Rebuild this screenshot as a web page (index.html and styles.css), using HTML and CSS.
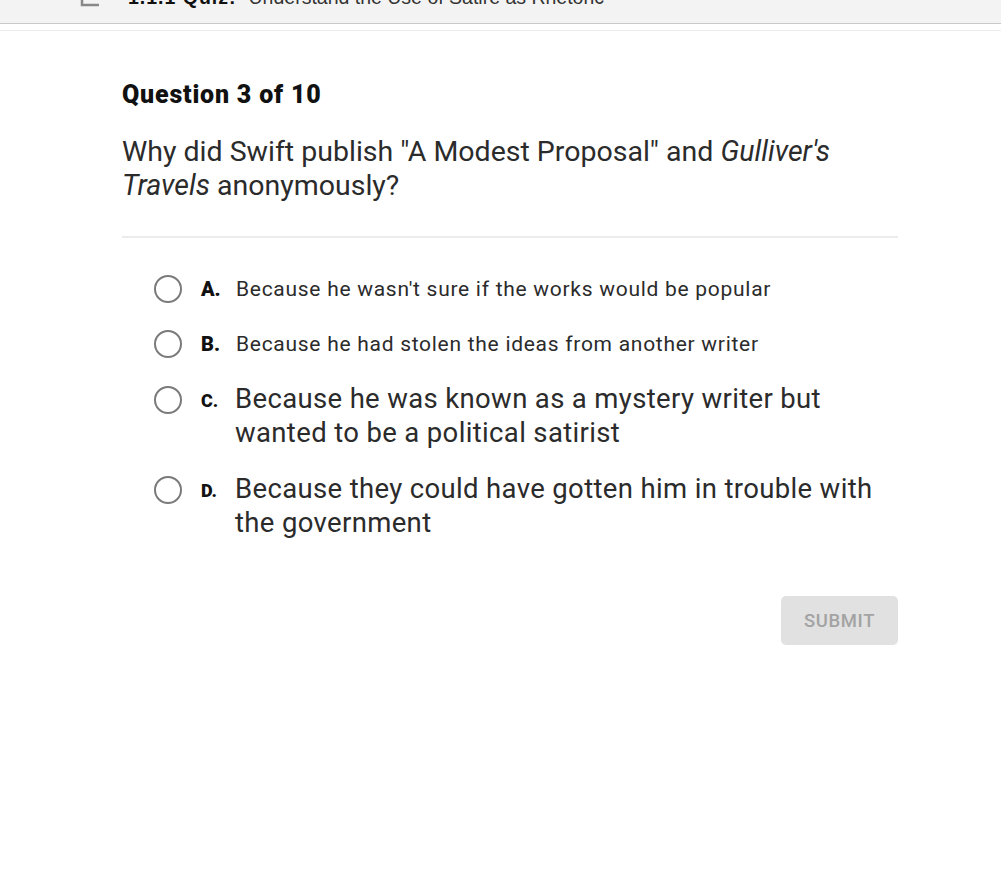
FILE: index.html
```html
<!DOCTYPE html>
<html>
<head>
<meta charset="utf-8">
<link rel="stylesheet" href="styles.css">
</head>
<body>
<header class="topbar">
  <div class="topbar-inner">
    <svg class="doc-icon" width="20" height="24" viewBox="0 0 20 24"><path d="M2 1 V21 H19" fill="none" stroke="#888" stroke-width="2.5"/></svg>
    <span class="quiz-num">1.1.1 Quiz:</span>
    <span class="quiz-title">Understand the Use of Satire as Rhetoric</span>
  </div>
</header>
<div class="subline"></div>
<main class="quiz">
  <h1 class="q-count">Question 3 of 10</h1>
  <p class="q-text">Why did Swift publish "A Modest Proposal" and <em>Gulliver's Travels</em> anonymously?</p>
  <hr class="divider">
  <ul class="options">
    <li class="option">
      <span class="radio"></span>
      <span class="letter">A.</span>
      <span class="answer small">Because he wasn't sure if the works would be popular</span>
    </li>
    <li class="option">
      <span class="radio"></span>
      <span class="letter">B.</span>
      <span class="answer small">Because he had stolen the ideas from another writer</span>
    </li>
    <li class="option">
      <span class="radio big-radio"></span>
      <span class="letter big-letter">C.</span>
      <span class="answer big">Because he was known as a mystery writer but wanted to be a political satirist</span>
    </li>
    <li class="option last">
      <span class="radio big-radio"></span>
      <span class="letter big-letter">D.</span>
      <span class="answer big">Because they could have gotten him in trouble with the government</span>
    </li>
  </ul>
  <div class="actions">
    <button class="submit">SUBMIT</button>
  </div>
</main>
</body>
</html>
```
FILE: styles.css
```css
* { box-sizing: border-box; }
html, body { margin: 0; padding: 0; background: #fff; }
body { font-family: Roboto, "Noto Sans", sans-serif; color: #222; }

.topbar {
  height: 24px;
  background: #f3f3f3;
  border-bottom: 1px solid #c9c9c9;
  overflow: hidden;
}
.topbar-inner {
  display: flex;
  align-items: flex-end;
  margin-top: -13px;
  height: 21px;
  padding-left: 80px;
  font-family: "Liberation Sans", Arial, sans-serif;
  font-size: 19.5px;
  line-height: 21px;
  color: #333;
}
.doc-icon { margin-right: 28px; align-self: flex-start; margin-top: -3px; }
.quiz-num { font-weight: bold; color: #111; margin-right: 12px; letter-spacing: 1px; }
.subline {
  height: 1px;
  margin-top: 6px;
  background: #ededed;
}

.quiz {
  width: 776px;
  margin-left: 122px;
}
.q-count {
  margin: 50px 0 0;
  font-size: 25px;
  line-height: 28px;
  font-weight: 900;
  letter-spacing: 0.8px;
  color: #111;
}
.q-text {
  margin: 26px 0 0;
  font-size: 28.5px;
  line-height: 34px;
  color: #2b2b2b;
}
.q-text em { font-style: italic; }
.divider {
  margin: 33px 0 0;
  border: 0;
  height: 2px;
  background: #ececec;
}

.options {
  list-style: none;
  margin: 34px 0 0;
  padding: 0 0 0 32px;
  display: flex;
  flex-direction: column;
  gap: 20px;
}
.option {
  display: flex;
  align-items: flex-start;
}
.option.last { margin-top: 2px; }
.radio {
  flex: none;
  width: 28px;
  height: 28px;
  border: 2.5px solid #7a7a7a;
  border-radius: 50%;
  margin-top: 3px;
  margin-right: 19px;
}
.big-radio { margin-top: 4px; }
.letter {
  flex: none;
  width: 35px;
  font-weight: 900;
  font-size: 20px;
  line-height: 35px;
  color: #111;
}
.big-letter { font-size: 18px; line-height: 38px; width: 34px; }
.answer { color: #2b2b2b; }
.small { font-size: 21px; line-height: 35px; letter-spacing: 0.72px; }
.big { font-size: 27.5px; line-height: 34px; letter-spacing: 0.35px; max-width: 660px; }

.actions {
  display: flex;
  justify-content: flex-end;
  margin-top: 56px;
}
.submit {
  width: 117px;
  height: 49px;
  border: 0;
  border-radius: 5px;
  background: #e1e1e1;
  color: #a3a3a3;
  font-family: Roboto, sans-serif;
  font-weight: 500;
  font-size: 18.5px;
  letter-spacing: 0.6px;
}
```
